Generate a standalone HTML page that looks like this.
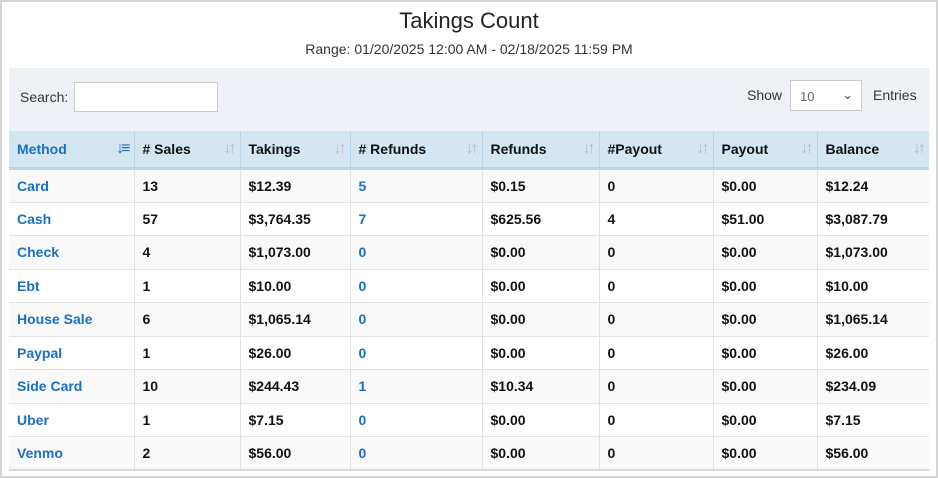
<!DOCTYPE html>
<html><head><style>
body{margin:0;width:938px;height:478px;overflow:hidden;background:#fff;font-family:"Liberation Sans",Arial,sans-serif}
.frame{position:absolute;left:0;top:0;width:934px;height:474px;border:2px solid #d4d4d4}
h1{position:absolute;left:0;width:938px;top:8px;margin:0;text-align:center;font-weight:normal;font-size:22px;color:#222}
.range{position:absolute;left:0;width:938px;top:41px;text-align:center;font-size:14px;color:#333}
.panel{position:absolute;left:9px;top:68px;width:920px;height:63px;background:#eef2f7}
.lbl{position:absolute;font-size:14px;color:#333}
.inp{position:absolute;left:74px;top:82px;width:142px;height:28px;border:1px solid #ccc;background:#fff}
.sel{position:absolute;left:790px;top:80px;width:72px;height:31px;border:1px solid #ccc;background:#fff;font-size:13px;color:#666;box-sizing:border-box;padding:8px 0 0 9px}
table{position:absolute;left:9px;top:131px;border-collapse:collapse;width:920px;table-layout:fixed}
th{background:#d3e6f2;height:36px;text-align:left;font-size:14px;padding:0 8px;border-left:1px solid #b9d6e8;border-bottom:3px solid #b9d6e8;position:relative;color:#111}
th:first-child{border-left:none;color:#1b6fc0}
th span{position:absolute;right:6px;top:9px;color:#bbb;font-size:16px;font-weight:normal;letter-spacing:-3px}
th:first-child span{color:#1b6fc0;font-weight:bold}
td{height:33.5px;padding:0 8px;font-size:14px;font-weight:bold;border-left:1px solid #e2e2e2;border-bottom:1px solid #e2e2e2;color:#111;box-sizing:border-box}
td:first-child{border-left:none;color:#1b6fc0}
tr:nth-child(odd) td{background:#f9f9f9}
.b{color:#1b6fc0}
tbody tr:last-child td{border-bottom:2px solid #d8d8d8}
</style></head><body>
<div class="frame"></div>
<h1>Takings Count</h1>
<div class="range">Range: 01/20/2025 12:00 AM - 02/18/2025 11:59 PM</div>
<div class="panel"></div>
<div class="lbl" style="left:20px;top:89px">Search:</div>
<div class="inp"></div>
<div class="lbl" style="left:747px;top:87px">Show</div>
<div class="sel">10<span style="position:absolute;right:8px;top:6px;color:#555">&#8964;</span></div>
<div class="lbl" style="left:873px;top:87px">Entries</div>
<table>
<colgroup><col style="width:125px"><col style="width:106px"><col style="width:110px"><col style="width:132px"><col style="width:117px"><col style="width:114px"><col style="width:104px"><col style="width:112px"></colgroup>
<thead><tr><th>Method<span>↓≡</span></th><th># Sales<span>↓↑</span></th><th>Takings<span>↓↑</span></th><th># Refunds<span>↓↑</span></th><th>Refunds<span>↓↑</span></th><th>#Payout<span>↓↑</span></th><th>Payout<span>↓↑</span></th><th>Balance<span>↓↑</span></th></tr></thead>
<tbody>
<tr><td>Card</td><td>13</td><td>$12.39</td><td class="b">5</td><td>$0.15</td><td>0</td><td>$0.00</td><td>$12.24</td></tr>
<tr><td>Cash</td><td>57</td><td>$3,764.35</td><td class="b">7</td><td>$625.56</td><td>4</td><td>$51.00</td><td>$3,087.79</td></tr>
<tr><td>Check</td><td>4</td><td>$1,073.00</td><td class="b">0</td><td>$0.00</td><td>0</td><td>$0.00</td><td>$1,073.00</td></tr>
<tr><td>Ebt</td><td>1</td><td>$10.00</td><td class="b">0</td><td>$0.00</td><td>0</td><td>$0.00</td><td>$10.00</td></tr>
<tr><td>House Sale</td><td>6</td><td>$1,065.14</td><td class="b">0</td><td>$0.00</td><td>0</td><td>$0.00</td><td>$1,065.14</td></tr>
<tr><td>Paypal</td><td>1</td><td>$26.00</td><td class="b">0</td><td>$0.00</td><td>0</td><td>$0.00</td><td>$26.00</td></tr>
<tr><td>Side Card</td><td>10</td><td>$244.43</td><td class="b">1</td><td>$10.34</td><td>0</td><td>$0.00</td><td>$234.09</td></tr>
<tr><td>Uber</td><td>1</td><td>$7.15</td><td class="b">0</td><td>$0.00</td><td>0</td><td>$0.00</td><td>$7.15</td></tr>
<tr><td>Venmo</td><td>2</td><td>$56.00</td><td class="b">0</td><td>$0.00</td><td>0</td><td>$0.00</td><td>$56.00</td></tr>
</tbody></table>
</body></html>
